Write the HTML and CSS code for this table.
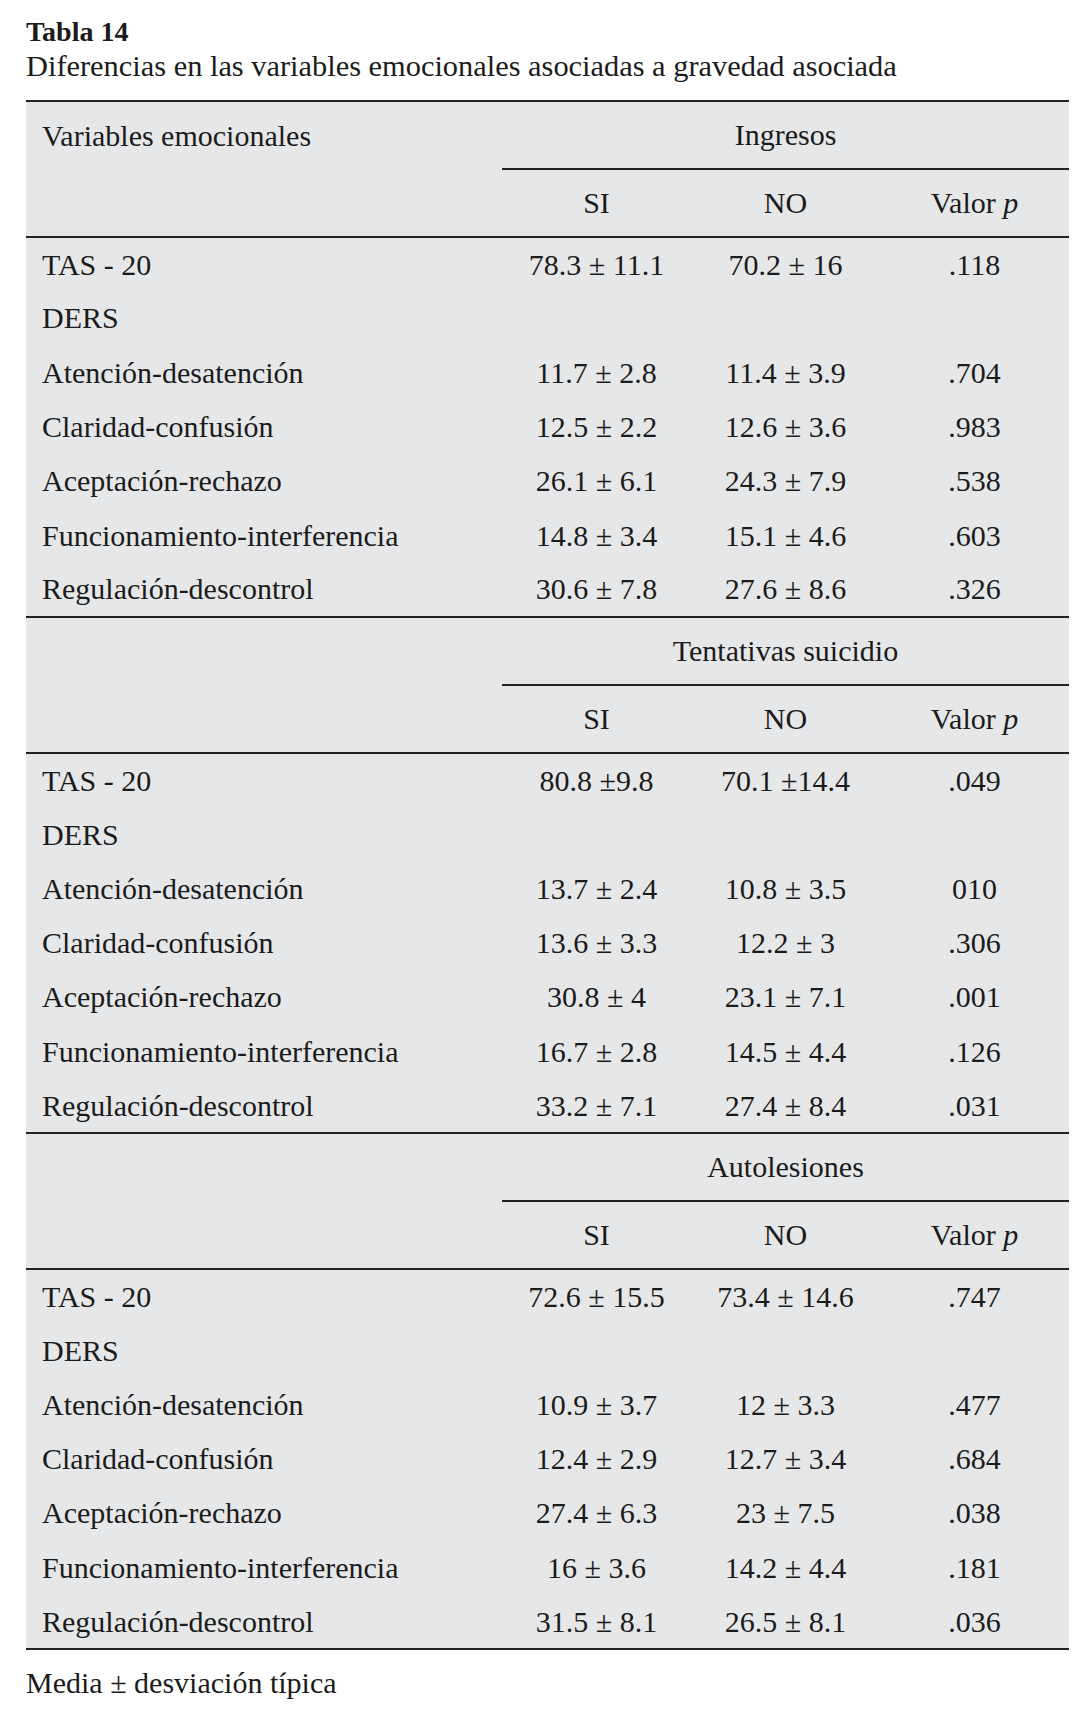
FILE: index.html
```html
<!DOCTYPE html>
<html lang="es">
<head>
<meta charset="utf-8">
<title>Tabla 14</title>
<link rel="stylesheet" href="styles.css">
</head>
<body>
<div class="page">
  <div class="caption-title">Tabla 14</div>
  <div class="caption-sub">Diferencias en las variables emocionales asociadas a gravedad asociada</div>
  <table class="data">
    <colgroup>
      <col class="c-var">
      <col class="c-num">
      <col class="c-num">
      <col class="c-num">
    </colgroup>
    <tbody>
      <tr class="h1"><th class="lab">Variables emocionales</th><th class="grp" colspan="3">Ingresos</th></tr>
      <tr class="h2"><th></th><th>SI</th><th>NO</th><th>Valor <i>p</i></th></tr>
      <tr><td>TAS - 20</td><td>78.3 ± 11.1</td><td>70.2 ± 16</td><td>.118</td></tr>
      <tr><td>DERS</td><td></td><td></td><td></td></tr>
      <tr><td>Atención-desatención</td><td>11.7 ± 2.8</td><td>11.4 ± 3.9</td><td>.704</td></tr>
      <tr><td>Claridad-confusión</td><td>12.5 ± 2.2</td><td>12.6 ± 3.6</td><td>.983</td></tr>
      <tr><td>Aceptación-rechazo</td><td>26.1 ± 6.1</td><td>24.3 ± 7.9</td><td>.538</td></tr>
      <tr><td>Funcionamiento-interferencia</td><td>14.8 ± 3.4</td><td>15.1 ± 4.6</td><td>.603</td></tr>
      <tr class="last"><td>Regulación-descontrol</td><td>30.6 ± 7.8</td><td>27.6 ± 8.6</td><td>.326</td></tr>
    </tbody>
    <tbody>
      <tr class="h1"><th class="lab"></th><th class="grp" colspan="3">Tentativas suicidio</th></tr>
      <tr class="h2"><th></th><th>SI</th><th>NO</th><th>Valor <i>p</i></th></tr>
      <tr><td>TAS - 20</td><td>80.8 ±9.8</td><td>70.1 ±14.4</td><td>.049</td></tr>
      <tr><td>DERS</td><td></td><td></td><td></td></tr>
      <tr><td>Atención-desatención</td><td>13.7 ± 2.4</td><td>10.8 ± 3.5</td><td>010</td></tr>
      <tr><td>Claridad-confusión</td><td>13.6 ± 3.3</td><td>12.2 ± 3</td><td>.306</td></tr>
      <tr><td>Aceptación-rechazo</td><td>30.8 ± 4</td><td>23.1 ± 7.1</td><td>.001</td></tr>
      <tr><td>Funcionamiento-interferencia</td><td>16.7 ± 2.8</td><td>14.5 ± 4.4</td><td>.126</td></tr>
      <tr class="last"><td>Regulación-descontrol</td><td>33.2 ± 7.1</td><td>27.4 ± 8.4</td><td>.031</td></tr>
    </tbody>
    <tbody>
      <tr class="h1"><th class="lab"></th><th class="grp" colspan="3">Autolesiones</th></tr>
      <tr class="h2"><th></th><th>SI</th><th>NO</th><th>Valor <i>p</i></th></tr>
      <tr><td>TAS - 20</td><td>72.6 ± 15.5</td><td>73.4 ± 14.6</td><td>.747</td></tr>
      <tr><td>DERS</td><td></td><td></td><td></td></tr>
      <tr><td>Atención-desatención</td><td>10.9 ± 3.7</td><td>12 ± 3.3</td><td>.477</td></tr>
      <tr><td>Claridad-confusión</td><td>12.4 ± 2.9</td><td>12.7 ± 3.4</td><td>.684</td></tr>
      <tr><td>Aceptación-rechazo</td><td>27.4 ± 6.3</td><td>23 ± 7.5</td><td>.038</td></tr>
      <tr><td>Funcionamiento-interferencia</td><td>16 ± 3.6</td><td>14.2 ± 4.4</td><td>.181</td></tr>
      <tr class="last"><td>Regulación-descontrol</td><td>31.5 ± 8.1</td><td>26.5 ± 8.1</td><td>.036</td></tr>
    </tbody>
  </table>
  <div class="foot">Media ± desviación típica</div>
</div>
</body>
</html>
```
FILE: styles.css
```css
html, body {
  margin: 0;
  padding: 0;
  background: #ffffff;
}
body {
  font-family: "Liberation Serif", "Times New Roman", serif;
  color: #1b1b1b;
}
.page {
  width: 1043px;
  padding: 15px 18px 0 26px;
}
.caption-title {
  font-size: 28px;
  font-weight: bold;
  line-height: 34px;
}
.caption-sub {
  font-size: 30.4px;
  line-height: 34px;
}
.data {
  margin-top: 17px;
  width: 1043px;
  table-layout: fixed;
  border-collapse: collapse;
  background: #e6e7e9;
  border-top: 2px solid #222;
  border-bottom: 2px solid #222;
  font-size: 30px;
}
.c-var { width: 476px; }
.c-num { width: 189px; }
.data th, .data td {
  padding: 0;
  font-weight: normal;
  text-align: center;
  vertical-align: middle;
  white-space: nowrap;
}
.data td:first-child, .data th.lab {
  text-align: left;
  padding-left: 16px;
}
.data tr { height: 54.3px; }
.data tr.h1, .data tr.h2 { height: 68px; }
.data tr.h1 th.grp { border-bottom: 2px solid #222; }
.data tr.h2 th { border-bottom: 2px solid #222; }
.data tr.last td { border-bottom: 2px solid #222; }
.foot {
  margin-top: 16px;
  font-size: 30px;
  line-height: 34px;
}
```
